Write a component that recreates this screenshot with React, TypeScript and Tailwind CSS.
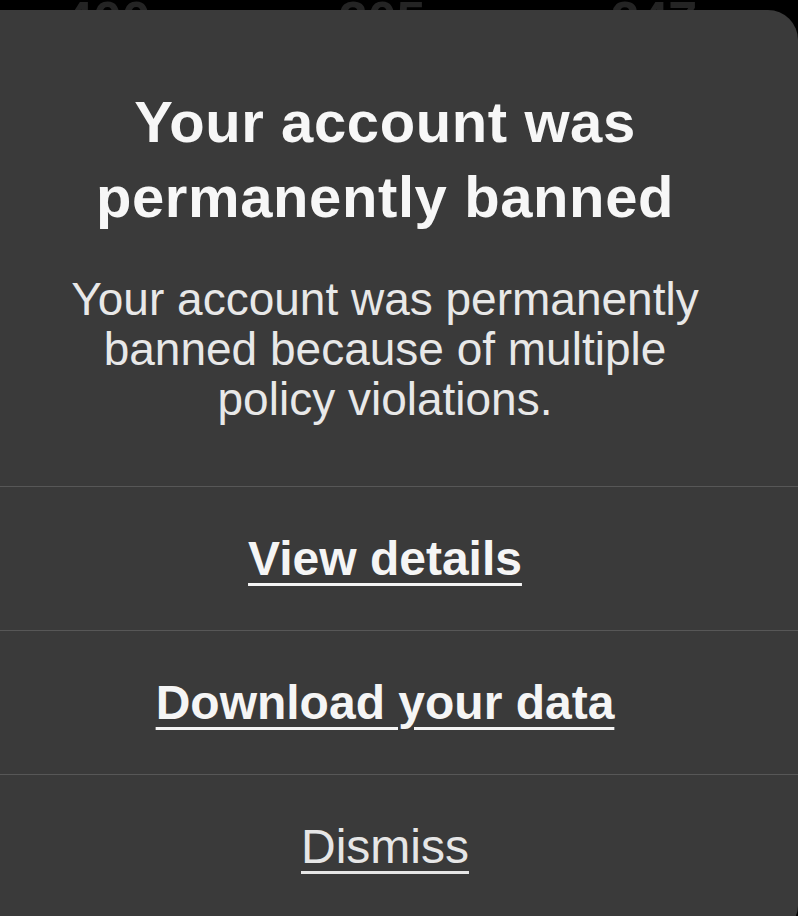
import React from "react";

export default function App() {
  const font = { fontFamily: '"Liberation Sans", Arial, sans-serif' };
  return (
    <div
      className="relative h-[916px] w-[798px] overflow-hidden bg-black"
      style={font}
    >
      <div className="flex pt-[2px] text-[52px] font-bold leading-[36px] text-[#242424]">
        <span className="ml-[64px]">400</span>
        <span className="ml-[188px]">305</span>
        <span className="ml-[185px]">247</span>
      </div>

      <div className="absolute left-[-28px] top-[10px] h-[920px] w-[826px] rounded-tr-[30px] rounded-br-[24px] bg-[#3a3a3a]">
        <div className="px-[40px] pt-[74px] text-center">
          <h1 className="text-[58px] font-bold leading-[75px] tracking-[0.6px] text-[#f7f7f7]">
            Your account was
            <br />
            permanently banned
          </h1>
          <p className="mt-[40px] text-[46px] leading-[50px] text-[#e8e8e8]">
            Your account was permanently
            <br />
            banned because of multiple
            <br />
            policy violations.
          </p>
        </div>
        <div className="mt-[62px] flex flex-col">
          <div className="flex h-[144px] items-center justify-center border-t border-[#575757]">
            <span className="text-[48px] font-bold leading-none text-[#f5f5f5] underline decoration-[3px] underline-offset-[8px]">
              View details
            </span>
          </div>
          <div className="flex h-[144px] items-center justify-center border-t border-[#575757]">
            <span className="text-[48px] font-bold leading-none text-[#f5f5f5] underline decoration-[3px] underline-offset-[8px]">
              Download your data
            </span>
          </div>
          <div className="flex h-[144px] items-center justify-center border-t border-[#575757]">
            <span className="text-[48px] leading-none text-[#e6e6e6] underline decoration-[3px] underline-offset-[8px]">
              Dismiss
            </span>
          </div>
        </div>
      </div>
    </div>
  );
}
